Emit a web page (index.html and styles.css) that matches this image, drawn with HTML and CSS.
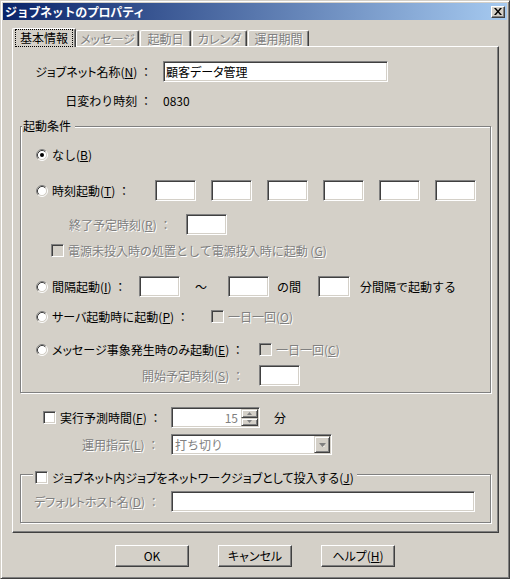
FILE: index.html
```html
<!DOCTYPE html>
<html lang="ja">
<head>
<meta charset="utf-8">
<title>ジョブネットのプロパティ</title>
<link rel="stylesheet" href="styles.css">
</head>
<body>
<div class="window">
  <div class="titlebar">
    <span class="title">ジョブネットのプロパティ</span>
    <span class="close"><svg width="8" height="7" viewBox="0 0 8 7"><path d="M0 0h2l2 2.5 2-2.5h2L5 3.5 8 7H6L4 4.5 2 7H0l3-3.5z" fill="#000"/></svg></span>
  </div>

  <div class="tabs">
    <div class="tab sel"><span class="focus">基本情報</span></div>
    <div class="tab t-msg"><span class="dis p">メッセージ</span></div>
    <div class="tab t-day"><span class="dis">起動日</span></div>
    <div class="tab t-cal"><span class="dis p">カレンダ</span></div>
    <div class="tab t-per"><span class="dis">運用期間</span></div>
  </div>

  <div class="panel">
    <div class="row r-name">
      <span class="lab-col"><span class="p">ジョブネット</span>名称(<u>N</u>) ：</span>
      <div class="tb tb-name">顧客<span class="p">データ</span>管理</div>
    </div>
    <div class="row r-day">
      <span class="lab-col">日変わり時刻 ：</span>
      <span class="val">0830</span>
    </div>

    <div class="group g1">
      <div class="legend">起動条件</div>

      <div class="row r-none">
        <svg class="radio" width="12" height="12" viewBox="0 0 12 12"><circle cx="6" cy="6" r="4.5" fill="#fff"/><path d="M2.11 9.89A5.5 5.5 0 0 1 9.89 2.11" fill="none" stroke="#808080"/><path d="M9.89 2.11A5.5 5.5 0 0 1 2.11 9.89" fill="none" stroke="#fff"/><path d="M2.82 9.18A4.5 4.5 0 0 1 9.18 2.82" fill="none" stroke="#404040"/><path d="M9.18 2.82A4.5 4.5 0 0 1 2.82 9.18" fill="none" stroke="#d4d0c8"/><circle cx="6" cy="6" r="2" fill="#000"/></svg>
        <span class="rlab">なし(<u>B</u>)</span>
      </div>

      <div class="row r-time">
        <svg class="radio" width="12" height="12" viewBox="0 0 12 12"><circle cx="6" cy="6" r="4.5" fill="#fff"/><path d="M2.11 9.89A5.5 5.5 0 0 1 9.89 2.11" fill="none" stroke="#808080"/><path d="M9.89 2.11A5.5 5.5 0 0 1 2.11 9.89" fill="none" stroke="#fff"/><path d="M2.82 9.18A4.5 4.5 0 0 1 9.18 2.82" fill="none" stroke="#404040"/><path d="M9.18 2.82A4.5 4.5 0 0 1 2.82 9.18" fill="none" stroke="#d4d0c8"/></svg>
        <span class="rlab w-time">時刻起動(<u>T</u>) ：</span>
        <div class="times">
          <div class="tb tb-s"></div>
          <div class="tb tb-s"></div>
          <div class="tb tb-s"></div>
          <div class="tb tb-s"></div>
          <div class="tb tb-s"></div>
          <div class="tb tb-s"></div>
        </div>
      </div>

      <div class="row r-end">
        <span class="dis w-end">終了予定時刻(<u>R</u>) ：</span>
        <div class="tb tb-s"></div>
      </div>

      <div class="row r-power">
        <div class="chk dchk"></div>
        <span class="clab dis">電源未投入時の処置として電源投入時に起動 (<u>G</u>)</span>
      </div>

      <div class="row r-int">
        <svg class="radio" width="12" height="12" viewBox="0 0 12 12"><circle cx="6" cy="6" r="4.5" fill="#fff"/><path d="M2.11 9.89A5.5 5.5 0 0 1 9.89 2.11" fill="none" stroke="#808080"/><path d="M9.89 2.11A5.5 5.5 0 0 1 2.11 9.89" fill="none" stroke="#fff"/><path d="M2.82 9.18A4.5 4.5 0 0 1 9.18 2.82" fill="none" stroke="#404040"/><path d="M9.18 2.82A4.5 4.5 0 0 1 2.82 9.18" fill="none" stroke="#d4d0c8"/></svg>
        <span class="rlab w-int">間隔起動(<u>I</u>) ：</span>
        <div class="tb tb-s"></div>
        <span class="tilde">～</span>
        <div class="tb tb-s"></div>
        <span class="between">の間</span>
        <div class="tb tb-xs"></div>
        <span class="every">分間隔で起動する</span>
      </div>

      <div class="row r-srv">
        <svg class="radio" width="12" height="12" viewBox="0 0 12 12"><circle cx="6" cy="6" r="4.5" fill="#fff"/><path d="M2.11 9.89A5.5 5.5 0 0 1 9.89 2.11" fill="none" stroke="#808080"/><path d="M9.89 2.11A5.5 5.5 0 0 1 2.11 9.89" fill="none" stroke="#fff"/><path d="M2.82 9.18A4.5 4.5 0 0 1 9.18 2.82" fill="none" stroke="#404040"/><path d="M9.18 2.82A4.5 4.5 0 0 1 2.82 9.18" fill="none" stroke="#d4d0c8"/></svg>
        <span class="rlab w-srv"><span class="p">サーバ</span>起動時に起動(<u>P</u>) ：</span>
        <div class="chk dchk"></div>
        <span class="clab dis">一日一回(<u>O</u>)</span>
      </div>

      <div class="row r-msg">
        <svg class="radio" width="12" height="12" viewBox="0 0 12 12"><circle cx="6" cy="6" r="4.5" fill="#fff"/><path d="M2.11 9.89A5.5 5.5 0 0 1 9.89 2.11" fill="none" stroke="#808080"/><path d="M9.89 2.11A5.5 5.5 0 0 1 2.11 9.89" fill="none" stroke="#fff"/><path d="M2.82 9.18A4.5 4.5 0 0 1 9.18 2.82" fill="none" stroke="#404040"/><path d="M9.18 2.82A4.5 4.5 0 0 1 2.82 9.18" fill="none" stroke="#d4d0c8"/></svg>
        <span class="rlab w-msg"><span class="p">メッセージ事象発生時のみ</span>起動(<u>E</u>) ：</span>
        <div class="chk dchk"></div>
        <span class="clab dis">一日一回(<u>C</u>)</span>
      </div>

      <div class="row r-start">
        <span class="dis w-end">開始予定時刻(<u>S</u>) ：</span>
        <div class="tb tb-s"></div>
      </div>
    </div>

    <div class="row r-est">
      <div class="chk"></div>
      <span class="clab w-est">実行予測時間(<u>F</u>) ：</span>
      <div class="spin">
        <div class="spin-text dis-plain">15</div>
        <div class="spin-btns">
          <div class="sbtn"><svg width="5" height="3" viewBox="0 0 5 3"><path d="M2.5 0L5 3H0z" fill="#808080"/></svg></div>
          <div class="sbtn"><svg width="5" height="3" viewBox="0 0 5 3"><path d="M0 0h5L2.5 3z" fill="#808080"/></svg></div>
        </div>
      </div>
      <span class="min">分</span>
    </div>

    <div class="row r-ops">
      <span class="dis w-ops">運用指示(<u>L</u>) ：</span>
      <div class="combo">
        <div class="combo-text dis-plain">打ち切り</div>
        <div class="combo-btn"><svg width="7" height="4" viewBox="0 0 7 4"><path d="M0 0h7L3.5 4z" fill="#808080"/><path d="M4.5 3.5h1" stroke="#fff"/></svg></div>
      </div>
    </div>

    <div class="group g2">
      <div class="g2-head">
        <div class="chk"></div>
        <span class="clab"><span class="p">ジョブネット内ジョブをネットワークジョブとして投入する</span>(<u>J</u>)</span>
      </div>
      <div class="row r-host">
        <span class="dis w-host"><span class="p">デフォルトホスト</span>名(<u>D</u>) ：</span>
        <div class="tb tb-host"></div>
      </div>
    </div>
  </div>

  <div class="buttons">
    <div class="btn">OK</div>
    <div class="btn"><span class="p">キャンセル</span></div>
    <div class="btn"><span class="p">ヘルプ</span>(<u>H</u>)</div>
  </div>
</div>
</body>
</html>
```

FILE: styles.css
```css
* { box-sizing: border-box; }
html, body { margin: 0; padding: 0; }
body {
  font-family: "Noto Sans CJK JP", "Noto Sans", sans-serif;
  font-size: 12px;
  line-height: 14px;
  color: #000;
  background: #d4d0c8;
}
u { text-decoration: underline; text-underline-offset: 1px; }
.p { font-feature-settings: "palt"; }

.window {
  width: 510px;
  height: 579px;
  border: 1px solid;
  border-color: #d4d0c8 #404040 #404040 #d4d0c8;
  box-shadow: inset 1px 1px 0 #fff, inset -1px -1px 0 #808080;
  padding: 2px;
  background: #d4d0c8;
}

.titlebar {
  height: 17px;
  background: linear-gradient(to right, #0a246a, #a6caf0);
  display: flex;
  align-items: center;
  justify-content: space-between;
  padding: 0 2px 0 2px;
}
.title { color: #fff; font-weight: bold; font-size: 12px; letter-spacing: -0.3px; }
.close {
  width: 14px;
  height: 12px;
  background: #d4d0c8;
  border: 1px solid;
  border-color: #fff #404040 #404040 #fff;
  box-shadow: inset -1px -1px 0 #808080;
  display: flex;
  align-items: center;
  justify-content: center;
}

.tabs {
  display: flex;
  align-items: flex-end;
  height: 18px;
  margin-top: 8px;
  padding-left: 9px;
}
.tab {
  height: 16px;
  border-top: 1px solid #fff;
  border-left: 1px solid #fff;
  border-right: 1px solid #404040;
  box-shadow: inset -1px 0 0 #808080;
  border-radius: 2px 2px 0 0;
  display: flex;
  align-items: center;
  justify-content: center;
  background: #d4d0c8;
}
.tab.sel {
  width: 64px;
  height: 19px;
  margin-bottom: -1px;
  position: relative;
  z-index: 1;
  align-items: flex-start;
  padding-top: 1px;
}
.t-msg { width: 63px; }
.t-day { width: 51px; margin-left: 1px; }
.t-cal { width: 55px; margin-left: 1px; }
.t-per { width: 61px; margin-left: 1px; }
.focus {
  outline: 1px dotted #000;
  outline-offset: 0;
  padding: 1px 4px;
  line-height: 14px;
}

.dis { color: #808080; text-shadow: 1px 1px 0 #fff; }
.dis-plain { color: #808080; }

.panel {
  margin-left: 9px;
  width: 487px;
  height: 487px;
  border: 1px solid;
  border-color: #fff #404040 #404040 #fff;
  box-shadow: inset -1px -1px 0 #808080;
  padding-top: 14px;
}

.row { display: flex; align-items: center; height: 21px; white-space: nowrap; }

.lab-col { width: 139px; text-align: right; flex: none; }
.tb {
  height: 21px;
  border: 1px solid;
  border-color: #808080 #fff #fff #808080;
  box-shadow: inset 1px 1px 0 #404040, inset -1px -1px 0 #d4d0c8;
  background: #fff;
  flex: none;
}
.tb-name { width: 225px; margin-left: 11px; padding: 0 2px; line-height: 19px; }
.r-day { margin-top: 9px; height: 20px; }
.val { margin-left: 11px; }

.group {
  margin-left: 7px;
  width: 471px;
  border: 1px solid #808080;
  box-shadow: inset 1px 1px 0 #fff, 1px 1px 0 #fff;
}
.g1 { margin-top: 15px; padding-bottom: 6px; }
.legend {
  width: fit-content;
  height: 14px;
  margin-top: -8px;
  margin-left: 1px;
  padding: 0 4px 0 1px;
  background: #d4d0c8;
}

.radio { width: 12px; height: 12px; flex: none; }
.rlab { margin-left: 4px; flex: none; }
.chk {
  width: 13px;
  height: 13px;
  border: 1px solid;
  border-color: #808080 #fff #fff #808080;
  box-shadow: inset 1px 1px 0 #404040, inset -1px -1px 0 #d4d0c8;
  background: #fff;
  flex: none;
}
.chk.dchk { background: #d4d0c8; }
.clab { margin-left: 4px; }

.r-none { margin-top: 11px; padding-left: 15px; }
.r-time { margin-top: 15px; padding-left: 15px; }
.w-time { width: 103px; }
.times { display: flex; gap: 15px; }
.tb-s { width: 41px; }
.tb-xs { width: 32px; }

.r-end { margin-top: 13px; padding-left: 48px; }
.w-end { width: 117px; flex: none; }

.r-power { margin-top: 9px; height: 13px; padding-left: 30px; }

.r-int { margin-top: 19px; padding-left: 15px; }
.w-int { width: 87px; }
.tilde { width: 48px; text-align: center; flex: none; padding-right: 6px; }
.between { width: 49px; padding-left: 8px; flex: none; }
.every { margin-left: 10px; }

.r-srv { margin-top: 9px; padding-left: 15px; }
.w-srv { width: 159px; }
.r-msg { margin-top: 12px; padding-left: 15px; }
.w-msg { width: 207px; }

.r-start { margin-top: 5px; padding-left: 121px; }

.r-est { margin-top: 14px; padding-left: 30px; }
.w-est { width: 111px; flex: none; }
.spin {
  width: 89px;
  height: 21px;
  display: flex;
  border: 1px solid;
  border-color: #808080 #fff #fff #808080;
  box-shadow: inset 1px 1px 0 #404040, inset -1px -1px 0 #d4d0c8;
  background: #fff;
  padding: 1px;
  flex: none;
}
.spin-text { flex: 1; text-align: right; padding-right: 3px; line-height: 17px; }
.spin-btns { width: 17px; display: flex; flex-direction: column; }
.sbtn {
  flex: 1;
  background: #d4d0c8;
  border: 1px solid;
  border-color: #d4d0c8 #404040 #404040 #d4d0c8;
  box-shadow: inset 1px 1px 0 #fff, inset -1px -1px 0 #808080;
  display: flex;
  align-items: center;
  justify-content: center;
}
.min { margin-left: 14px; }

.r-ops { margin-top: 6px; padding-left: 69px; }
.w-ops { width: 89px; flex: none; }
.combo {
  width: 161px;
  height: 21px;
  display: flex;
  border: 1px solid;
  border-color: #808080 #fff #fff #808080;
  box-shadow: inset 1px 1px 0 #404040, inset -1px -1px 0 #d4d0c8;
  background: #fff;
  padding: 1px;
  flex: none;
}
.combo-text { flex: 1; padding-left: 2px; line-height: 17px; }
.combo-btn {
  width: 16px;
  background: #d4d0c8;
  border: 1px solid;
  border-color: #d4d0c8 #404040 #404040 #d4d0c8;
  box-shadow: inset 1px 1px 0 #fff, inset -1px -1px 0 #808080;
  display: flex;
  align-items: center;
  justify-content: center;
}

.g2 { margin-top: 19px; padding-bottom: 10px; }
.g2-head {
  display: flex;
  align-items: center;
  width: fit-content;
  height: 13px;
  margin-top: -4px;
  margin-left: 12px;
  padding: 0 3px 0 2px;
  background: #d4d0c8;
  white-space: nowrap;
}
.r-host { margin-top: 7px; padding-left: 13px; }
.w-host { width: 137px; flex: none; }
.tb-host { width: 304px; }

.buttons {
  display: flex;
  gap: 29px;
  margin-top: 12px;
  padding-left: 112px;
}
.btn {
  width: 74px;
  height: 22px;
  border: 1px solid;
  border-color: #fff #404040 #404040 #fff;
  box-shadow: inset -1px -1px 0 #808080;
  display: flex;
  align-items: center;
  justify-content: center;
  white-space: nowrap;
}
```
